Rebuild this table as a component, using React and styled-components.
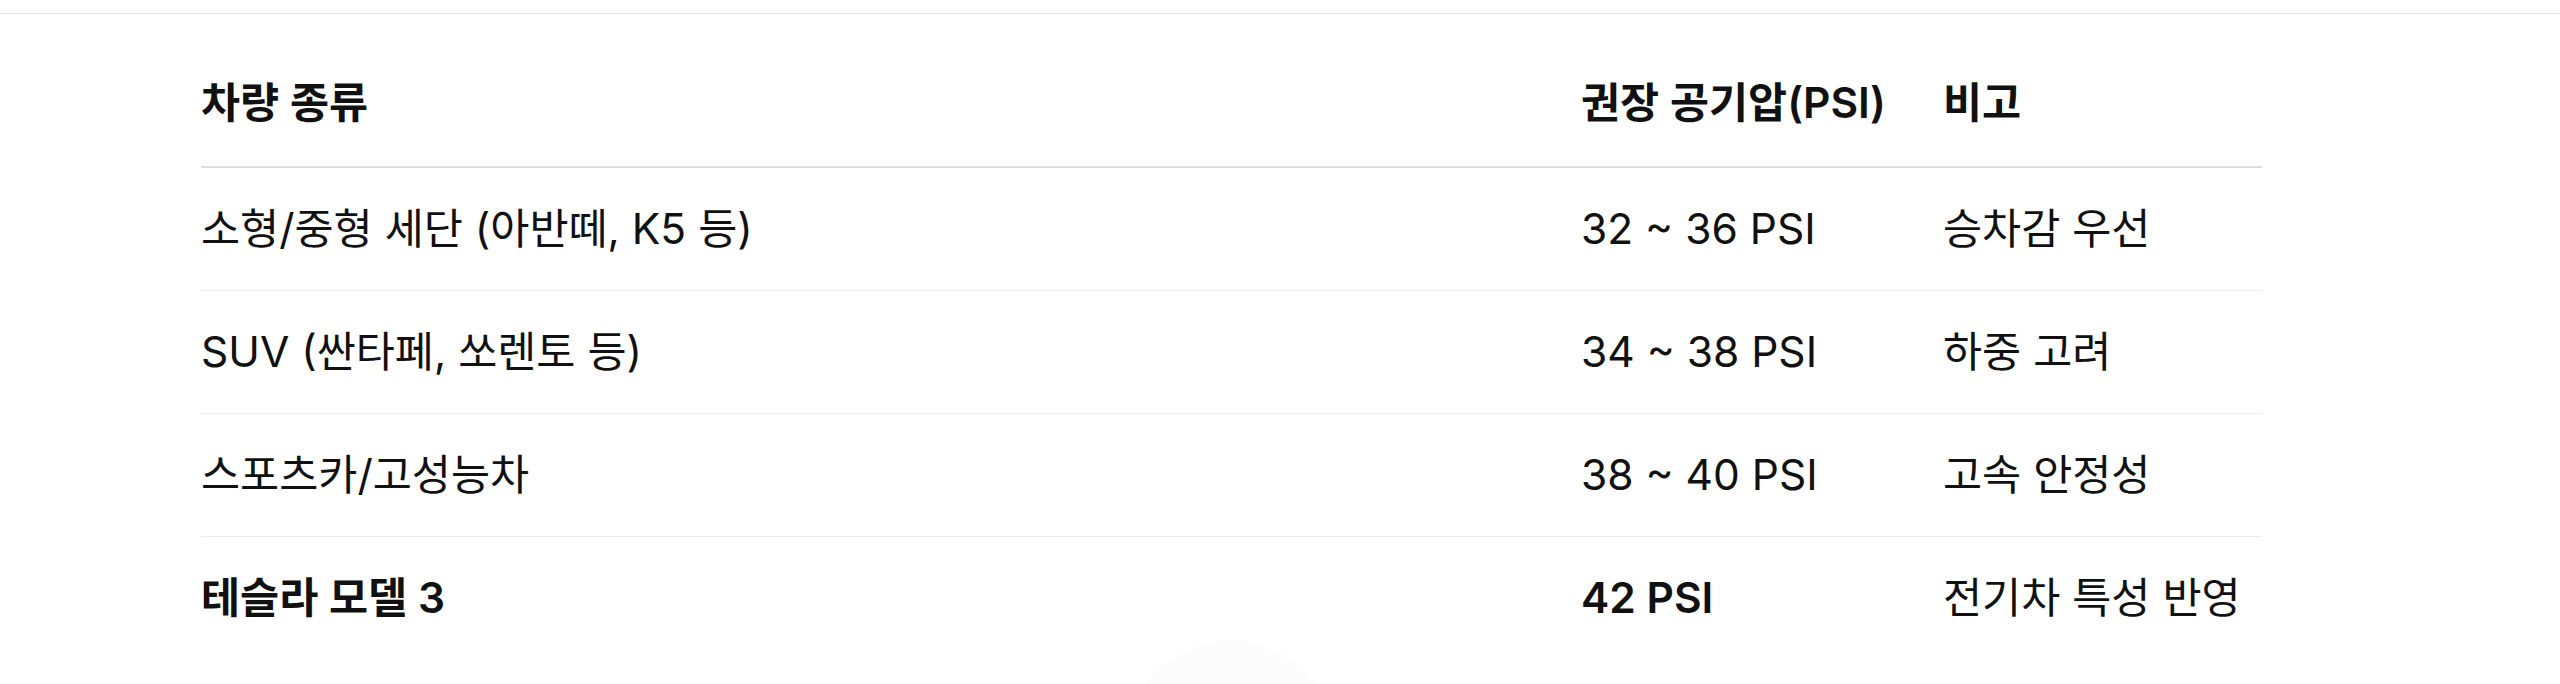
import React from "react";
import styled, { createGlobalStyle } from "styled-components";

const GlobalStyle = createGlobalStyle`
  html, body {
    margin: 0;
    padding: 0;
    background: #ffffff;
  }
  body {
    font-family: Inter, "Noto Sans CJK KR", "Noto Sans", sans-serif;
    color: #111111;
    overflow: hidden;
  }
`;

const Page = styled.div`
  position: relative;
  width: 2560px;
  height: 684px;
  padding-top: 13px;
  box-sizing: border-box;
  overflow: hidden;
`;

const Divider = styled.div`
  height: 1px;
  background: #e6e6e6;
`;

const Content = styled.section`
  padding: 26px 298px 0 201px;
`;

const Table = styled.table`
  width: 2061px;
  border-collapse: collapse;
  table-layout: fixed;
  font-size: 42.5px;
  line-height: 60px;
  letter-spacing: 0;
`;

const HeadCell = styled.th`
  text-align: left;
  font-weight: 600;
  padding: 33px 0;
  border-bottom: 2px solid #dedede;
  color: #111111;
  white-space: nowrap;
`;

const Row = styled.tr`
  border-bottom: ${(p) => (p.$last ? "none" : "1px solid #ececec")};
`;

const Cell = styled.td`
  padding: 31px 0;
  font-weight: ${(p) => (p.$strong ? 600 : 400)};
  color: #111111;
  white-space: nowrap;
`;

const Glow = styled.div`
  position: absolute;
  left: 1126px;
  top: 641px;
  width: 210px;
  height: 210px;
  border-radius: 50%;
  background: #fcfcfc;
  pointer-events: none;
`;

const rows = [
  { type: "소형/중형 세단 (아반떼, K5 등)", psi: "32 ~ 36 PSI", note: "승차감 우선" },
  { type: "SUV (싼타페, 쏘렌토 등)", psi: "34 ~ 38 PSI", note: "하중 고려" },
  { type: "스포츠카/고성능차", psi: "38 ~ 40 PSI", note: "고속 안정성" },
  { type: "테슬라 모델 3", psi: "42 PSI", note: "전기차 특성 반영", strong: true },
];

export default function App() {
  return (
    <>
      <GlobalStyle />
      <Page>
        <Divider />
        <Content>
          <Table>
            <colgroup>
              <col style={{ width: "1380px" }} />
              <col style={{ width: "362px" }} />
              <col />
            </colgroup>
            <thead>
              <tr>
                <HeadCell>차량 종류</HeadCell>
                <HeadCell>권장 공기압(PSI)</HeadCell>
                <HeadCell>비고</HeadCell>
              </tr>
            </thead>
            <tbody>
              {rows.map((r, i) => (
                <Row key={r.type} $last={i === rows.length - 1}>
                  <Cell $strong={r.strong}>{r.type}</Cell>
                  <Cell $strong={r.strong}>{r.psi}</Cell>
                  <Cell>{r.note}</Cell>
                </Row>
              ))}
            </tbody>
          </Table>
        </Content>
        <Glow />
      </Page>
    </>
  );
}
